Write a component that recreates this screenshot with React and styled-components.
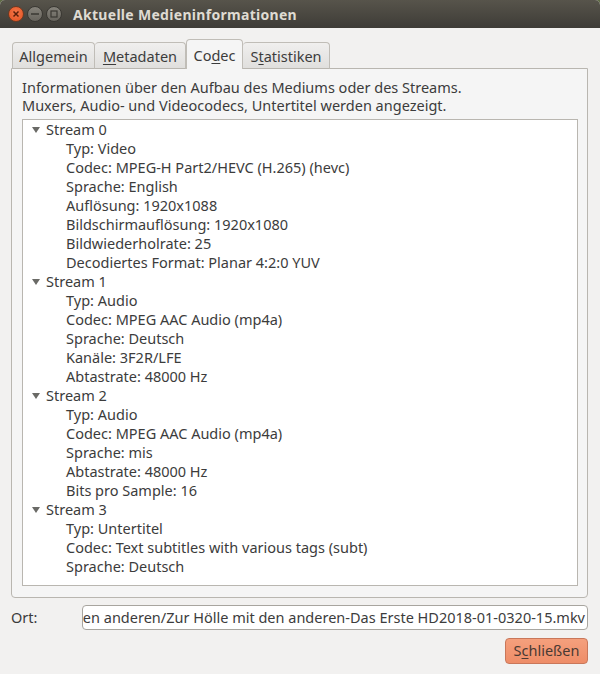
import React from "react";
import styled, { createGlobalStyle } from "styled-components";

const Global = createGlobalStyle`
  html, body { margin: 0; padding: 0; background: #5f6b45; }
  body { font-family: "Noto Sans", "Open Sans", sans-serif; font-size: 14.5px; color: #3c3c3c; }
`;
const Win = styled.div`
  width: 600px; height: 674px; display: flex; flex-direction: column; overflow: hidden;
  background: #f2f1f0; border-radius: 5px 5px 0 0;
`;
const TitleBar = styled.div`
  height: 28px; flex: none; display: flex; align-items: center; padding-left: 8px; gap: 3px;
  background: linear-gradient(#57544b, #3e3c37);
`;
const WinBtn = styled.span`
  width: 16px; height: 16px; border-radius: 50%; display: flex; align-items: center; justify-content: center;
  background: ${p => p.$close ? "radial-gradient(circle at 50% 40%, #f4774a, #e2501f)" : "linear-gradient(#85827a, #67645d)"};
  border: 1px solid ${p => p.$close ? "#6e3a22" : "#3a3833"};
  box-sizing: border-box; flex: none;
`;
const Title = styled.div`
  margin-left: 8px; color: #dfdbd2; font-weight: 700; font-size: 14px; letter-spacing: 0.3px;
`;
const Body = styled.div`
  flex: 1; display: flex; flex-direction: column; padding: 11px 12px 0 11px; min-height: 0;
`;
const Tabs = styled.div`
  display: flex; height: 30px; align-items: flex-end; padding-left: 1px; margin-bottom: -1px; position: relative; z-index: 1;
`;
const Tab = styled.div`
  box-sizing: border-box; width: ${p => p.$w}px; height: ${p => p.$active ? 30 : 27}px;
  display: flex; align-items: center; justify-content: center;
  border: 1px solid #c0bdb7; border-left-width: ${p => p.$first || p.$active ? 1 : 0}px;
  border-bottom: ${p => p.$active ? "none" : "1px solid #b9b6b0"};
  border-radius: 4px 4px 0 0;
  background: ${p => p.$active ? "#f5f5f5" : "linear-gradient(#f0efee, #e0dfdd)"};
`;
const Mn = styled.span` text-decoration: underline; text-underline-offset: 2px; `;
const Panel = styled.div`
  box-sizing: border-box; height: 530px; flex: none; border: 1px solid #b9b6b0; border-radius: 0 0 4px 4px;
  background: #f5f5f5; padding: 9px 9px 11px 10px; display: flex; flex-direction: column;
`;
const Desc = styled.div` line-height: 18px; height: 41px; `;
const Tree = styled.div`
  flex: 1; background: #fff; border: 1px solid #b9b6b0; min-height: 0;
`;
const Row = styled.div`
  height: 19px; line-height: 19px; white-space: nowrap; display: flex; align-items: center;
  padding-left: ${p => p.$head ? 8 : 43}px;
`;
const Arrow = styled.svg` width: 10px; height: 8px; margin-right: 5px; flex: none; `;
const OrtRow = styled.div` display: flex; align-items: center; margin-top: 7px; height: 25px; `;
const Label = styled.div` width: 71px; flex: none; padding-bottom: 1px; `;
const Field = styled.div`
  box-sizing: border-box; flex: 1; height: 25px; background: #fff; border: 1px solid #a8a59f; border-radius: 4px;
  display: flex; align-items: center; justify-content: flex-end; padding: 0 2px 1px; overflow: hidden; white-space: nowrap;
`;
const Footer = styled.div` display: flex; justify-content: flex-end; margin-top: 8px; `;
const CloseBtn = styled.div`
  box-sizing: border-box; width: 83px; height: 26px; display: flex; align-items: center; justify-content: center;
  padding-bottom: 2px;
  border: 1px solid #c9775a; border-radius: 4px; background: linear-gradient(#f5a07d, #ee8d68); color: #4a3a33;
`;

const streams = [
  ["Stream 0", ["Typ: Video", "Codec: MPEG-H Part2/HEVC (H.265) (hevc)", "Sprache: English", "Auflösung: 1920x1088", "Bildschirmauflösung: 1920x1080", "Bildwiederholrate: 25", "Decodiertes Format: Planar 4:2:0 YUV"]],
  ["Stream 1", ["Typ: Audio", "Codec: MPEG AAC Audio (mp4a)", "Sprache: Deutsch", "Kanäle: 3F2R/LFE", "Abtastrate: 48000 Hz"]],
  ["Stream 2", ["Typ: Audio", "Codec: MPEG AAC Audio (mp4a)", "Sprache: mis", "Abtastrate: 48000 Hz", "Bits pro Sample: 16"]],
  ["Stream 3", ["Typ: Untertitel", "Codec: Text subtitles with various tags (subt)", "Sprache: Deutsch"]],
];

export default function App() {
  return (
    <Win>
      <Global />
      <TitleBar>
        <WinBtn $close>
          <svg width="8" height="8" viewBox="0 0 8 8"><path d="M1.5 1.5l5 5M6.5 1.5l-5 5" stroke="#5a1f0a" strokeWidth="1.5" /></svg>
        </WinBtn>
        <WinBtn>
          <svg width="10" height="8" viewBox="0 0 10 8"><path d="M1 4h8" stroke="#3a3833" strokeWidth="1.5" /></svg>
        </WinBtn>
        <WinBtn>
          <svg width="8" height="8" viewBox="0 0 8 8"><rect x="1" y="1" width="6" height="6" fill="none" stroke="#3a3833" strokeWidth="1.2" /></svg>
        </WinBtn>
        <Title>Aktuelle Medieninformationen</Title>
      </TitleBar>
      <Body>
        <Tabs>
          <Tab $first $w={83}><span>All<Mn>g</Mn>emein</span></Tab>
          <Tab $w={91}><span><Mn>M</Mn>etadaten</span></Tab>
          <Tab $active $w={57}><span>Co<Mn>d</Mn>ec</span></Tab>
          <Tab $w={87}><span>S<Mn>t</Mn>atistiken</span></Tab>
        </Tabs>
        <Panel>
          <Desc>
            Informationen über den Aufbau des Mediums oder des Streams.<br />
            Muxers, Audio- und Videocodecs, Untertitel werden angezeigt.
          </Desc>
          <Tree>
            {streams.map(([name, rows]) => (
              <React.Fragment key={name}>
                <Row $head>
                  <Arrow viewBox="0 0 10 8"><path d="M1 1h8L5 7z" fill="#6a6a66" /></Arrow>
                  {name}
                </Row>
                {rows.map((r, i) => <Row key={i}>{r}</Row>)}
              </React.Fragment>
            ))}
          </Tree>
        </Panel>
        <OrtRow>
          <Label>Ort:</Label>
          <Field>en anderen/Zur Hölle mit den anderen-Das Erste HD2018-01-0320-15.mkv</Field>
        </OrtRow>
        <Footer>
          <CloseBtn><span>S<Mn>c</Mn>hließen</span></CloseBtn>
        </Footer>
      </Body>
    </Win>
  );
}
